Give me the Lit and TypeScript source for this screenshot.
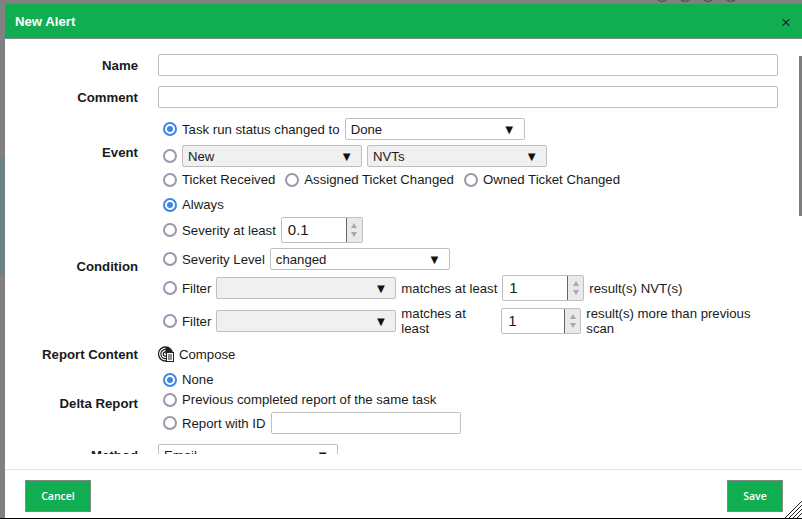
import { LitElement, html, css } from 'lit';
import { customElement } from 'lit/decorators.js';

@customElement('app-root')
export class AppRoot extends LitElement {
  static styles = css`
    :host {
      display: block;
      position: relative;
      height: 519px;
      box-sizing: border-box;
      border-bottom: 1px solid #000;
      overflow: hidden;
      font-family: 'Liberation Sans', Arial, sans-serif;
      font-size: 13.2px;
      line-height: 15px;
      color: #1a1a1a;
      background:
        linear-gradient(to bottom, transparent 155px, #6f8087 155px, #6f8087 276px, transparent 276px),
        #808080;
    }

    .peek-title {
      position: absolute;
      left: 170px;
      top: -12px;
      font-weight: bold;
      font-size: 13px;
      color: #4a4a4a;
    }

    .peek-icons {
      position: absolute;
      left: 655px;
      top: -11px;
      display: flex;
      gap: 9px;
    }

    .dialog {
      position: absolute;
      left: 5px;
      top: 4px;
      width: 797px;
      height: 514px;
      background: #fff;
      display: flex;
      flex-direction: column;
    }

    .header {
      flex: none;
      height: 34px;
      box-sizing: content-box;
      background: #11ad51;
      border-bottom: 1px solid #7f8a84;
      color: #fff;
      display: flex;
      align-items: center;
      justify-content: space-between;
      padding: 0 11px 0 10px;
      font-weight: bold;
    }

    .close {
      font-weight: normal;
      font-size: 17px;
      color: #16301f;
      padding-top: 2px;
    }

    .body {
      flex: none;
      height: 400px;
      padding-top: 15px;
      margin-bottom: 15px;
      overflow: hidden;
      display: flex;
      flex-direction: column;
      gap: 10px;
    }

    .thumb {
      position: absolute;
      right: 0;
      top: 52px;
      width: 3px;
      height: 160px;
      background: #7f7f7f;
    }

    .row {
      flex: none;
      display: grid;
      grid-template-columns: 113px 620px;
      column-gap: 20px;
      padding-left: 20px;
      align-items: center;
    }

    .label {
      text-align: right;
      font-weight: bold;
    }

    .group {
      display: flex;
      flex-direction: column;
      gap: 5px;
      padding-left: 5px;
    }

    .line {
      display: flex;
      align-items: center;
      gap: 5px;
    }

    .radio {
      flex: none;
      width: 14px;
      height: 14px;
      box-sizing: border-box;
      border: 2px solid #9a98ac;
      border-radius: 50%;
      background: #fff;
      display: flex;
      align-items: center;
      justify-content: center;
    }

    .radio.on {
      border-color: #3b88e6;
    }

    .radio.on::after {
      content: '';
      width: 6px;
      height: 6px;
      border-radius: 50%;
      background: #3b88e6;
    }

    .gap-left {
      margin-left: 5px;
    }

    .input {
      height: 22px;
      box-sizing: border-box;
      border: 1px solid #bfbfbf;
      border-radius: 2px;
      background: #fff;
    }

    .input.wide {
      width: 620px;
    }

    .input.id {
      width: 190px;
    }

    .select {
      flex: none;
      width: 180px;
      height: 22px;
      box-sizing: border-box;
      border: 1px solid #bfbfbf;
      border-radius: 2px;
      background: #fff;
      display: flex;
      align-items: center;
      justify-content: space-between;
      padding: 0 8px 0 5px;
    }

    .select.grey {
      background: #f0f0f0;
    }

    .arrow {
      font-size: 13px;
      color: #111;
    }

    .spin {
      flex: none;
      width: 82px;
      height: 26px;
      box-sizing: border-box;
      border: 1px solid #bfbfbf;
      border-radius: 2px;
      background: #fff;
      display: flex;
      font-size: 15px;
    }

    .spin.narrow {
      width: 80px;
    }

    .spin .value {
      flex: 1;
      padding-left: 6px;
      line-height: 24px;
    }

    .spin .btns {
      flex: none;
      width: 15px;
      background: #e9e9e9;
      border-left: 1px solid #666;
      display: flex;
      flex-direction: column;
      align-items: center;
      justify-content: center;
      gap: 4px;
    }

    .up,
    .down {
      width: 0;
      height: 0;
      border-left: 3px solid transparent;
      border-right: 3px solid transparent;
    }

    .up {
      border-bottom: 5px solid #a9a9a9;
    }

    .down {
      border-top: 5px solid #a9a9a9;
    }

    .tall {
      height: 30px;
    }

    .wrap-short {
      flex: none;
      width: 95px;
    }

    .wrap-long {
      flex: 1;
    }

    .compose {
      display: flex;
      align-items: center;
      gap: 5px;
      height: 16px;
    }

    .footer {
      flex: none;
      border-top: 1px solid #e5e5e5;
      padding: 10px 19px 6px 20px;
      display: flex;
      justify-content: space-between;
    }

    .btn {
      height: 32px;
      box-sizing: border-box;
      background: #11ad51;
      border: 1px solid #7a8a80;
      color: #fff;
      font-family: 'Open Sans', sans-serif;
      font-size: 10.5px;
      font-weight: 600;
      display: flex;
      align-items: center;
      justify-content: center;
    }

    .btn.cancel {
      width: 66px;
    }

    .btn.save {
      width: 56px;
    }

    .grip {
      position: absolute;
      right: 0;
      bottom: 0;
      display: block;
    }
  `;

  private radio(on = false) {
    return html`<span class="radio ${on ? 'on' : ''}"></span>`;
  }

  private select(text: string, grey = false) {
    return html`<div class="select ${grey ? 'grey' : ''}">
      <span>${text}</span><span class="arrow">▼</span>
    </div>`;
  }

  private spinner(value: string, narrow = false) {
    return html`<div class="spin ${narrow ? 'narrow' : ''}">
      <span class="value">${value}</span>
      <span class="btns"><span class="up"></span><span class="down"></span></span>
    </div>`;
  }

  render() {
    return html`
      <span class="peek-title">Filter</span>
      <div class="peek-icons">
        ${[0, 1, 2, 3].map(
          () => html`<svg width="14" height="14" viewBox="0 0 14 14">
            <circle cx="7" cy="7" r="5.5" fill="none" stroke="#555" stroke-width="1.5"></circle>
          </svg>`
        )}
      </div>

      <div class="dialog">
        <div class="header">
          <span>New Alert</span>
          <span class="close">×</span>
        </div>

        <div class="body">
          <div class="row">
            <div class="label">Name</div>
            <div class="input wide"></div>
          </div>
          <div class="row">
            <div class="label">Comment</div>
            <div class="input wide"></div>
          </div>

          <div class="row">
            <div class="label">Event</div>
            <div class="group">
              <div class="line">
                ${this.radio(true)}<span>Task run status changed to</span>${this.select('Done')}
              </div>
              <div class="line">
                ${this.radio()}
                ${this.select('New', true)}${this.select('NVTs', true)}
              </div>
              <div class="line">
                ${this.radio()}<span>Ticket Received</span>
                <span class="radio gap-left"></span><span>Assigned Ticket Changed</span>
                <span class="radio gap-left"></span><span>Owned Ticket Changed</span>
              </div>
            </div>
          </div>

          <div class="row">
            <div class="label">Condition</div>
            <div class="group">
              <div class="line">${this.radio(true)}<span>Always</span></div>
              <div class="line">
                ${this.radio()}<span>Severity at least</span>${this.spinner('0.1')}
              </div>
              <div class="line">
                ${this.radio()}<span>Severity Level</span>${this.select('changed')}
              </div>
              <div class="line">
                ${this.radio()}<span>Filter</span>${this.select('', true)}
                <span>matches at least</span>${this.spinner('1')}
                <span>result(s) NVT(s)</span>
              </div>
              <div class="line tall">
                ${this.radio()}<span>Filter</span>${this.select('', true)}
                <span class="wrap-short">matches at least</span>${this.spinner('1', true)}
                <span class="wrap-long">result(s) more than previous scan</span>
              </div>
            </div>
          </div>

          <div class="row">
            <div class="label">Report Content</div>
            <div class="compose">
              <svg width="16" height="16" viewBox="0 0 16 16">
                <circle cx="7.5" cy="8" r="7" fill="#fff" stroke="#222" stroke-width="1.3"></circle>
                <circle cx="7.5" cy="8" r="4.6" fill="none" stroke="#222" stroke-width="1.2"></circle>
                <circle cx="7.5" cy="8" r="2.2" fill="none" stroke="#222" stroke-width="1.2"></circle>
                <path d="M7.5 8 L7.5 1 A7 7 0 0 1 14.5 8 Z" fill="#222"></path>
                <rect x="8.5" y="6.5" width="7" height="9" fill="#fff" stroke="#222"></rect>
                <path d="M10 9h4M10 11h4M10 13h4" stroke="#222"></path>
              </svg>
              <span>Compose</span>
            </div>
          </div>

          <div class="row">
            <div class="label">Delta Report</div>
            <div class="group">
              <div class="line">${this.radio(true)}<span>None</span></div>
              <div class="line">
                ${this.radio()}<span>Previous completed report of the same task</span>
              </div>
              <div class="line">
                ${this.radio()}<span>Report with ID</span><div class="input id"></div>
              </div>
            </div>
          </div>

          <div class="row">
            <div class="label">Method</div>
            <div>${this.select('Email')}</div>
          </div>
        </div>

        <div class="thumb"></div>

        <div class="footer">
          <div class="btn cancel">Cancel</div>
          <div class="btn save">Save</div>
        </div>

        <svg class="grip" width="17" height="17" viewBox="0 0 17 17">
          <path
            d="M0 17L17 0M4 17L17 4M8 17L17 8M12 17L17 12"
            stroke="#222"
            stroke-width="1"
          ></path>
        </svg>
      </div>
    `;
  }
}

declare global {
  interface HTMLElementTagNameMap {
    'app-root': AppRoot;
  }
}
